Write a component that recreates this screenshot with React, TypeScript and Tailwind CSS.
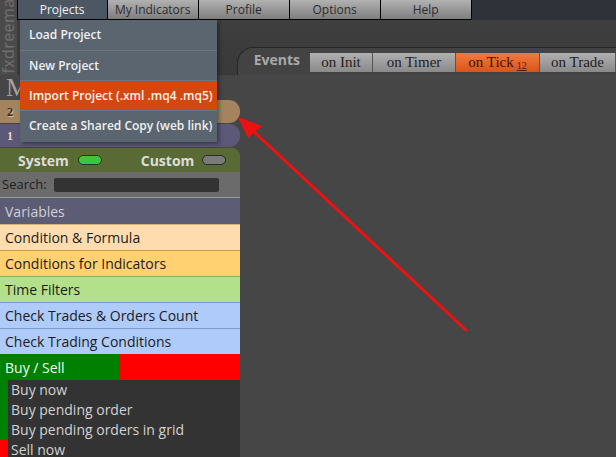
import React from "react";

const menu = ["Projects", "My Indicators", "Profile", "Options", "Help"];

const dropdown = [
  { label: "Load Project" },
  { label: "New Project" },
  { label: "Import Project (.xml .mq4 .mq5)", active: true },
  { label: "Create a Shared Copy (web link)" },
];

const groups = [
  { label: "Condition & Formula", bg: "bg-[#ffdcae]", border: "border-[#d9b27a]" },
  { label: "Conditions for Indicators", bg: "bg-[#ffd171]", border: "border-[#c9a048]" },
  { label: "Time Filters", bg: "bg-[#b3e08b]", border: "border-[#86b066]" },
  { label: "Check Trades & Orders Count", bg: "bg-[#aecbfa]", border: "border-[#7f9cc8]" },
  { label: "Check Trading Conditions", bg: "bg-[#aecbfa]", border: "border-[#7f9cc8]" },
];

const blocks = [
  { label: "Buy now", bar: "bg-[#008000]" },
  { label: "Buy pending order", bar: "bg-[#008000]" },
  { label: "Buy pending orders in grid", bar: "bg-[#008000]" },
  { label: "Sell now", bar: "bg-[#ff0000]" },
];

const tabs = [
  { label: "on Init", w: "w-[63px]" },
  { label: "on Timer", w: "w-[83px]" },
  { label: "on Tick", w: "w-[84px]", active: true, badge: "12" },
  { label: "on Trade", w: "w-[76px]" },
];

export default function App() {
  return (
    <div
      className="relative w-[616px] h-[457px] overflow-hidden bg-[#464646] flex flex-col"
      style={{ fontFamily: '"Open Sans", "Noto Sans", sans-serif' }}
    >
      {/* top: logo strip + menu bar + tab strip */}
      <div className="flex h-[75px] shrink-0">
        <div className="w-[20px] h-full bg-[#4a4a4a] flex items-center justify-center overflow-hidden">
          <span className="-rotate-90 whitespace-nowrap text-[16px] text-[#707070] tracking-wide mt-[-4px]">
            fxdreema
          </span>
        </div>
        <div className="flex-1 flex flex-col">
          <div className="h-[20px] flex bg-[#2f3239]">
            {menu.map((m, i) => (
              <div
                key={m}
                className={`w-[91px] h-full flex items-center justify-center text-[12px] border-r border-b border-black ${
                  i === 0
                    ? "bg-[#4d5764] text-[#eef2f6] border-l"
                    : "bg-gradient-to-b from-[#b2b2b2] to-[#7e7e7e] text-[#2c2c2c]"
                }`}
              >
                {m}
              </div>
            ))}
          </div>
          <div className="flex-1 flex bg-gradient-to-b from-[#3f3f3f] to-[#393939]">
            <div className="w-[220px]" />
            <div className="flex-1 flex flex-col justify-end">
              <div className="h-[28px] rounded-tl-[16px] border-t border-l border-[#262626] bg-[#434343] flex items-end pl-[16px] pb-[3px]">
                <span className="text-[14px] font-bold text-[#a9a9a9] mr-[10px] mb-[2px]">Events</span>
                {tabs.map((t) => (
                  <div
                    key={t.label}
                    className={`${t.w} h-[19px] flex items-center justify-center border-r border-[#555] text-[15px] ${
                      t.active
                        ? "bg-gradient-to-b from-[#f27a3c] to-[#d9541a] text-[#3a1200]"
                        : "bg-gradient-to-b from-[#b0b0b0] to-[#8a8a8a] text-[#222]"
                    }`}
                    style={{ fontFamily: '"Liberation Serif", "DejaVu Serif", serif' }}
                  >
                    {t.label}
                    {t.badge && (
                      <span className="ml-[3px] mt-[6px] text-[10px] underline text-[#5a1a00]">{t.badge}</span>
                    )}
                  </div>
                ))}
              </div>
            </div>
          </div>
        </div>
      </div>

      {/* body */}
      <div className="flex-1 flex min-h-0">
        <div className="w-[240px] flex flex-col bg-[#464646]">
          <div
            className="h-[25px] shrink-0 pl-[6px] text-[26px] leading-[26px] text-[#a0a0a0]"
            style={{ fontFamily: '"Liberation Serif", serif' }}
          >
            M
          </div>
          <div className="h-[23px] shrink-0 rounded-r-[11px] bg-[#a3845f] flex items-center pl-[7px]">
            <span className="text-[12px] font-bold text-[#3a2818]" style={{ fontFamily: '"Liberation Serif", serif', textShadow: "1px 1px 0 #d8c0a0" }}>2</span>
          </div>
          <div className="h-[23px] shrink-0 mt-[1px] rounded-r-[11px] bg-[#5b5977] flex items-center pl-[7px]">
            <span className="text-[12px] font-bold text-[#e8d8c8]" style={{ fontFamily: '"Liberation Serif", serif' }}>1</span>
          </div>
          <div className="h-[24px] shrink-0 mt-[1px] rounded-tr-[8px] bg-[#5a6a34] flex items-center text-[14px] font-bold text-[#dcdcdc]">
            <span className="ml-[18px]">System</span>
            <span className="ml-[9px] w-[24px] h-[10px] rounded-full bg-[#3ec43e] border border-[#1e3a1e]" />
            <span className="ml-[39px]">Custom</span>
            <span className="ml-[8px] w-[24px] h-[10px] rounded-full bg-[#7a7a7a] border border-[#2a2a2a]" />
          </div>
          <div className="h-[26px] shrink-0 bg-[#6b6b6b] border-b border-[#9a9a9a] flex items-center pl-[2px] text-[13px] text-[#1e1e1e]">
            Search:
            <span className="ml-[7px] w-[165px] h-[14px] rounded-[2px] bg-[#333]" />
          </div>
          <div className="h-[26px] shrink-0 bg-[#5c5c74] flex items-center pl-[5px] text-[14px] text-[#cfcfdc]">Variables</div>
          {groups.map((g) => (
            <div key={g.label} className={`h-[26px] shrink-0 ${g.bg} border-t ${g.border} flex items-center pl-[5px] text-[14px] text-[#1c1c1c]`}>
              {g.label}
            </div>
          ))}
          <div className="h-[26px] shrink-0 flex text-[14px] text-[#f2fff2]">
            <div className="w-[120px] bg-[#008000] flex items-center pl-[5px]">Buy / Sell</div>
            <div className="flex-1 bg-[#ff0000]" />
          </div>
          <div className="flex-1 bg-[#333] flex flex-col">
            {blocks.map((b) => (
              <div key={b.label} className="h-[20px] flex shrink-0">
                <div className={`w-[8px] ${b.bar}`} />
                <div className="pl-[3px] text-[14px] leading-[20px] text-[#d2d2d2]">{b.label}</div>
              </div>
            ))}
          </div>
        </div>
        <div className="flex-1 bg-[#464646]" />
      </div>

      {/* dropdown menu */}
      <div className="absolute left-[20px] top-[20px] w-[197px] bg-[#5b6570] shadow-[2px_2px_4px_rgba(0,0,0,0.4)] pb-[2px]">
        {dropdown.map((d, i) => (
          <div
            key={d.label}
            className={`h-[30px] flex items-center pl-[9px] text-[12px] font-semibold ${
              i > 0 ? "border-t border-[#6c7681]" : ""
            } ${d.active ? "bg-[#d4470e] text-[#fff0e6]" : "text-[#eef0f2]"}`}
          >
            {d.label}
          </div>
        ))}
      </div>

      {/* annotation arrow */}
      <svg className="absolute left-0 top-0 pointer-events-none" width="616" height="457">
        <line x1="466" y1="330" x2="250" y2="128" stroke="#ee1111" strokeWidth="3" strokeLinecap="round" />
        <polygon points="238,117 262,126 248,138" fill="#ee1111" />
      </svg>
    </div>
  );
}
